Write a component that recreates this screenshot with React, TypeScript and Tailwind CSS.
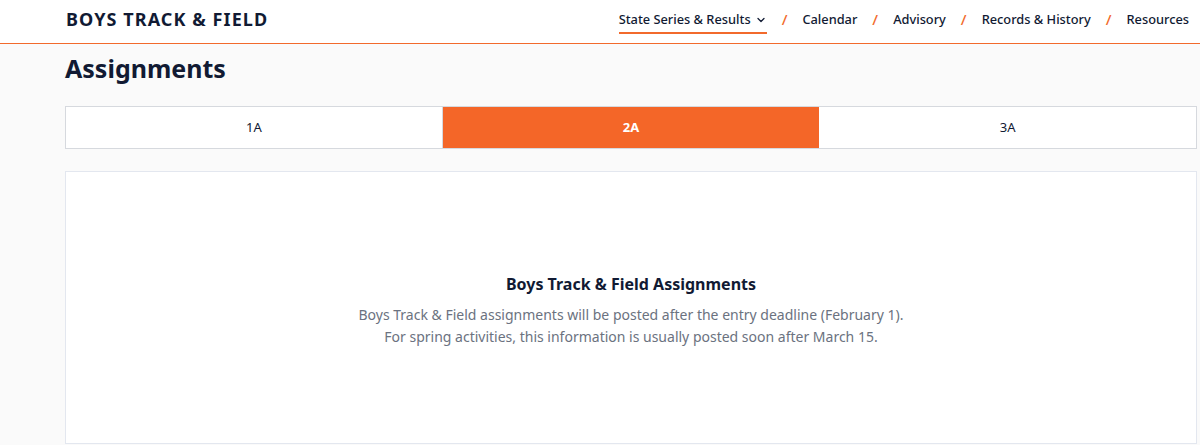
import { ChevronDown } from 'lucide-react';

const navItems = ['Calendar', 'Advisory', 'Records & History', 'Resources'];
const tabs = ['1A', '2A', '3A'];

export default function App() {
  return (
    <div className="min-h-[445px] bg-[#fafafa] text-[#111a33]" style={{ fontFamily: '"Noto Sans", "Open Sans", sans-serif' }}>
      <header className="bg-white">
        <div className="h-[43px] flex items-center justify-between pl-[66px] pr-[11px] pb-[4px]">
          <h1 className="text-[18px] font-bold tracking-[0.06em] text-[#111a33]">BOYS TRACK &amp; FIELD</h1>
          <nav className="flex items-center text-[12.8px] font-medium">
            <div className="flex flex-col items-center pt-[5px]">
              <span className="flex items-center gap-[4px]">
                State Series &amp; Results
                <ChevronDown className="w-[12px] h-[12px] stroke-[2.5]" />
              </span>
              <span className="h-[2px] w-full bg-[#f26a2c] mt-[3px]" />
            </div>
            {navItems.map((item) => (
              <div key={item} className="flex items-center">
                <span className="text-[#f26a2c] text-[15px] mx-[15px]">/</span>
                <span>{item}</span>
              </div>
            ))}
          </nav>
        </div>
        <div className="h-px bg-[#f26a2c]" />
      </header>

      <main className="pl-[65px] pr-[3px]">
        <h2 className="text-[25px] font-bold leading-none pt-[12px] pb-[25px]">Assignments</h2>
        <div className="grid grid-cols-3 border border-[#d6d9de] bg-white h-[43px] text-[13px]">
          {tabs.map((t) => (
            <div
              key={t}
              className={`flex items-center justify-center ${t === '2A' ? 'bg-[#f46628] text-white font-bold' : 'text-[#111a33]'} ${t === '1A' ? 'border-r border-[#d6d9de]' : ''}`}
            >
              {t}
            </div>
          ))}
        </div>
        <section className="mt-[22px] bg-white border border-[#e3e7ef] h-[273px] flex flex-col items-center justify-center text-center pt-[4px]">
          <h3 className="text-[16px] font-bold text-[#111a33] mb-[8px]">Boys Track &amp; Field Assignments</h3>
          <p className="text-[14px] leading-[22px] text-[#6b7280]">
            Boys Track &amp; Field assignments will be posted after the entry deadline (February 1).
            <br />
            For spring activities, this information is usually posted soon after March 15.
          </p>
        </section>
      </main>
    </div>
  );
}
